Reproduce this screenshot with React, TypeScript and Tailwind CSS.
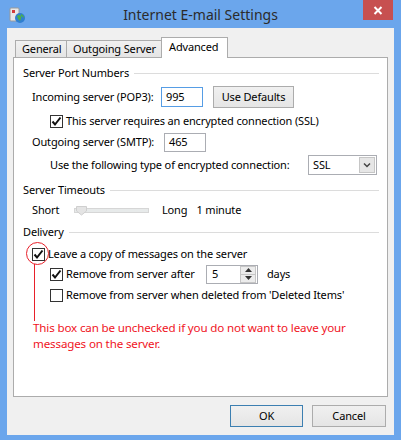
const font = "font-['Segoe_UI','Noto_Sans',sans-serif]";

function Check({ checked }: { checked: boolean }) {
  return (
    <div className="relative shrink-0 w-[13px] h-[13px] border border-[#333333] bg-white">
      {checked && (
        <svg className="absolute inset-0" width="11" height="11" viewBox="0 0 11 11">
          <path d="M1.5 5.5 L4 8.5 L9.5 1.5" fill="none" stroke="#111" strokeWidth="2" />
        </svg>
      )}
    </div>
  );
}

function GroupHeader({ label }: { label: string }) {
  return (
    <div className="flex items-center h-[16px] pr-[8px]">
      <span className="whitespace-nowrap">{label}</span>
      <div className="flex-1 h-px bg-[#dcdcdc] ml-[5px]" />
    </div>
  );
}

function WinButton({ label, primary, width }: { label: string; primary?: boolean; width: string }) {
  return (
    <div
      className={`${width} h-[22px] flex items-center justify-center border bg-gradient-to-b from-[#f0f0f0] to-[#e5e5e5] whitespace-nowrap ${
        primary ? "border-[#3c7fb1]" : "border-[#acacac]"
      }`}
    >
      {label}
    </div>
  );
}

function TitleIcon() {
  return (
    <svg width="18" height="18" viewBox="0 0 18 18">
      <rect x="2" y="2" width="9" height="13" rx="1" fill="#e8e8e8" stroke="#9a9a9a" />
      <rect x="4" y="4" width="3" height="3" fill="#d23c3c" />
      <circle cx="12" cy="12" r="5" fill="#2f7fd0" />
      <path d="M9 10 Q11 8 13 10 Q14 12 12 15 Q10 14 9 10Z" fill="#4cb04c" />
      <path d="M13 8 Q16 9 16 12 Q15 11 13 10Z" fill="#4cb04c" />
    </svg>
  );
}

export default function App() {
  return (
    <div
      className={`w-[401px] h-[440px] bg-[#6ba6ec] flex flex-col text-[11px] tracking-[-0.15px] text-black whitespace-nowrap ${font}`}
    >
      {/* Title bar */}
      <div className="relative h-[28px] flex items-center">
        <div className="pl-[8px] pt-[2px]">
          <TitleIcon />
        </div>
        <div className="absolute inset-x-0 top-[5px] text-center text-[14px] tracking-normal text-[#2b2b2b] leading-[20px]">
          Internet E-mail Settings
        </div>
        <div className="absolute top-0 right-[8px] w-[30px] h-[20px] bg-[#c75050] flex items-center justify-center">
          <svg width="10" height="9" viewBox="0 0 10 9">
            <path d="M1.5 1 L8.5 8 M8.5 1 L1.5 8" stroke="white" strokeWidth="2" />
          </svg>
        </div>
      </div>

      {/* Client area */}
      <div className="mx-[7px] h-[407px] bg-[#f0f0f0] flex flex-col px-[6px]">
        {/* Tabs */}
        <div className="flex items-end pt-[9px] pl-[2px] -mb-px relative z-10">
          <div className="w-[52px] h-[18px] border border-[#acacac] bg-gradient-to-b from-[#f0f0f0] to-[#e5e5e5] flex items-center pl-[6px]">
            General
          </div>
          <div className="w-[96px] h-[18px] -ml-px border border-[#acacac] bg-gradient-to-b from-[#f0f0f0] to-[#e5e5e5] flex items-center pl-[6px]">
            Outgoing Server
          </div>
          <div className="w-[67px] h-[21px] -ml-px border border-b-0 border-[#acacac] bg-white flex items-start pt-[1px] pl-[7px]">
            Advanced
          </div>
        </div>

        {/* Panel */}
        <div className="relative h-[340px] border border-[#acacac] bg-white flex flex-col pl-[9px]">
          <div className="mt-[7px]">
            <GroupHeader label="Server Port Numbers" />
          </div>

          <div className="mt-[6px] h-[20px] flex items-center pl-[9px]">
            <span className="w-[129px]">Incoming server (POP3):</span>
            <div className="w-[42px] h-[20px] border border-[#569de5] bg-white flex items-center pl-[4px]">995</div>
            <div className="ml-[10px]">
              <WinButton label="Use Defaults" width="w-[81px]" />
            </div>
          </div>

          <div className="mt-[7px] h-[14px] flex items-center pl-[27px] gap-[3px]">
            <Check checked />
            <span>This server requires an encrypted connection (SSL)</span>
          </div>

          <div className="mt-[4px] h-[20px] flex items-center pl-[9px]">
            <span className="w-[132px]">Outgoing server (SMTP):</span>
            <div className="w-[42px] h-[19px] border border-[#abadb3] bg-white flex items-center pl-[4px]">465</div>
          </div>

          <div className="mt-[3px] h-[20px] flex items-center pl-[27px]">
            <span className="w-[258px]">Use the following type of encrypted connection:</span>
            <div className="w-[69px] h-[20px] border border-[#abadb3] bg-white flex items-center justify-between pl-[4px] pr-px">
              <span>SSL</span>
              <div className="w-[16px] h-[16px] border border-[#c6c6c6] bg-[#e6e6e6] flex items-center justify-center">
                <svg width="8" height="6" viewBox="0 0 8 6">
                  <path d="M1 1.5 L4 4.5 L7 1.5" fill="none" stroke="#444" strokeWidth="1.5" />
                </svg>
              </div>
            </div>
          </div>

          <div className="mt-[7px]">
            <GroupHeader label="Server Timeouts" />
          </div>

          <div className="mt-[4px] h-[16px] flex items-center pl-[9px]">
            <span className="w-[42px]">Short</span>
            <div className="relative w-[75px] h-[5px] border border-[#d6d6d6] bg-[#e7eaea]">
              <svg className="absolute left-[1px] -top-[3px]" width="11" height="10" viewBox="0 0 11 10">
                <path d="M0.5 0.5 H10.5 V5 L5.5 9 L0.5 5 Z" fill="#e4e4e4" stroke="#cfcfcf" />
              </svg>
            </div>
            <span className="ml-[13px]">Long</span>
            <span className="ml-[9px]">1 minute</span>
          </div>

          <div className="mt-[6px]">
            <GroupHeader label="Delivery" />
          </div>

          <div className="mt-[6px] h-[16px] flex items-center pl-[9px] gap-[3px]">
            <Check checked />
            <span>Leave a copy of messages on the server</span>
          </div>

          <div className="mt-[2px] h-[20px] flex items-center pl-[27px]">
            <Check checked />
            <span className="ml-[3px] w-[140px]">Remove from server after</span>
            <div className="w-[52px] h-[19px] border border-[#abadb3] bg-white flex items-center justify-between pl-[5px] pr-px">
              <span>5</span>
              <div className="flex flex-col w-[16px] h-[17px] border border-[#c6c6c6] bg-[#ececec]">
                <div className="flex-1 flex items-center justify-center border-b border-[#c6c6c6]">
                  <svg width="7" height="4" viewBox="0 0 7 4">
                    <path d="M0 4 L3.5 0 L7 4Z" fill="#333" />
                  </svg>
                </div>
                <div className="flex-1 flex items-center justify-center">
                  <svg width="7" height="4" viewBox="0 0 7 4">
                    <path d="M0 0 L3.5 4 L7 0Z" fill="#333" />
                  </svg>
                </div>
              </div>
            </div>
            <span className="ml-[9px]">days</span>
          </div>

          <div className="mt-[4px] h-[14px] flex items-center pl-[27px] gap-[3px]">
            <Check checked={false} />
            <span>Remove from server when deleted from 'Deleted Items'</span>
          </div>

          <div className="mt-[18px] pl-[10px] text-[11.6px] tracking-[-0.15px] leading-[16px] text-[#f0141e]">
            <div>This box can be unchecked if you do not want to leave your</div>
            <div>messages on the server.</div>
          </div>

          {/* Annotation circle and line */}
          <div className="absolute left-[12px] top-[184px] w-[23px] h-[23px] rounded-full border border-[#e8202a]" />
          <div className="absolute left-[20px] top-[206px] w-px h-[57px] bg-[#e8202a]" />
        </div>

        {/* Buttons */}
        <div className="mt-[8px] flex justify-end gap-[9px] pr-[2px]">
          <WinButton label="OK" primary width="w-[73px]" />
          <WinButton label="Cancel" width="w-[74px]" />
        </div>
      </div>
    </div>
  );
}
